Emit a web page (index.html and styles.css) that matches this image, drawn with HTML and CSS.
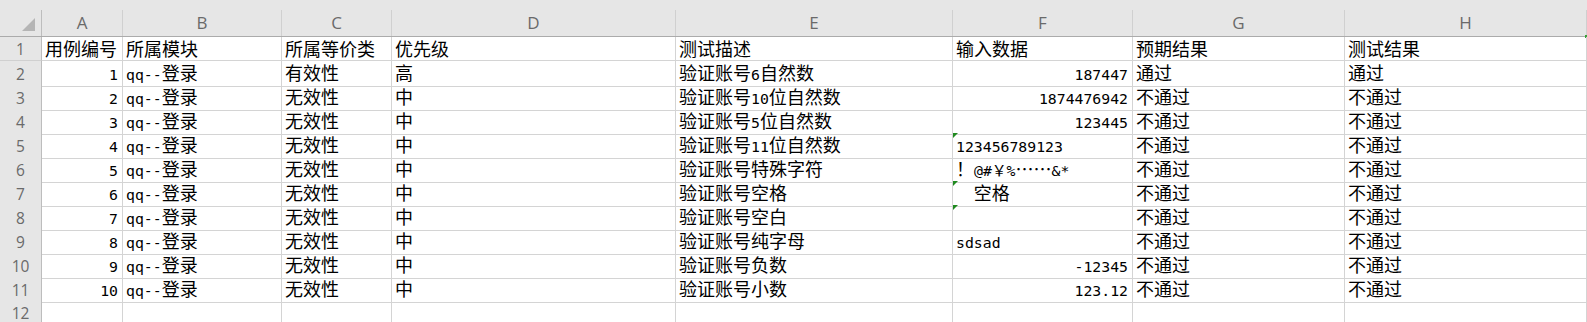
FILE: index.html
```html
<!DOCTYPE html>
<html lang="zh-CN">
<head>
<meta charset="utf-8">
<title>测试用例</title>
<link rel="stylesheet" href="styles.css">
</head>
<body>
<div class="sheet">
  <div class="colhead">
    <div class="hc corner"><span class="tri"></span></div>
    <div class="hc">A</div>
    <div class="hc">B</div>
    <div class="hc">C</div>
    <div class="hc">D</div>
    <div class="hc">E</div>
    <div class="hc">F</div>
    <div class="hc">G</div>
    <div class="hc last">H</div>
  </div>

  <div class="row">
    <div class="rn">1</div>
    <div class="c">用例编号</div>
    <div class="c">所属模块</div>
    <div class="c">所属等价类</div>
    <div class="c">优先级</div>
    <div class="c">测试描述</div>
    <div class="c">输入数据</div>
    <div class="c">预期结果</div>
    <div class="c">测试结果</div>
  </div>
  <div class="row">
    <div class="rn">2</div>
    <div class="c r"><span class="m">1</span></div>
    <div class="c"><span class="m">qq--</span>登录</div>
    <div class="c">有效性</div>
    <div class="c">高</div>
    <div class="c">验证账号<span class="m">6</span>自然数</div>
    <div class="c r"><span class="m">187447</span></div>
    <div class="c">通过</div>
    <div class="c">通过</div>
  </div>
  <div class="row">
    <div class="rn">3</div>
    <div class="c r"><span class="m">2</span></div>
    <div class="c"><span class="m">qq--</span>登录</div>
    <div class="c">无效性</div>
    <div class="c">中</div>
    <div class="c">验证账号<span class="m">10</span>位自然数</div>
    <div class="c r"><span class="m">1874476942</span></div>
    <div class="c">不通过</div>
    <div class="c">不通过</div>
  </div>
  <div class="row">
    <div class="rn">4</div>
    <div class="c r"><span class="m">3</span></div>
    <div class="c"><span class="m">qq--</span>登录</div>
    <div class="c">无效性</div>
    <div class="c">中</div>
    <div class="c">验证账号<span class="m">5</span>位自然数</div>
    <div class="c r"><span class="m">123445</span></div>
    <div class="c">不通过</div>
    <div class="c">不通过</div>
  </div>
  <div class="row">
    <div class="rn">5</div>
    <div class="c r"><span class="m">4</span></div>
    <div class="c"><span class="m">qq--</span>登录</div>
    <div class="c">无效性</div>
    <div class="c">中</div>
    <div class="c">验证账号<span class="m">11</span>位自然数</div>
    <div class="c flag"><span class="m">123456789123</span></div>
    <div class="c">不通过</div>
    <div class="c">不通过</div>
  </div>
  <div class="row">
    <div class="rn">6</div>
    <div class="c r"><span class="m">5</span></div>
    <div class="c"><span class="m">qq--</span>登录</div>
    <div class="c">无效性</div>
    <div class="c">中</div>
    <div class="c">验证账号特殊字符</div>
    <div class="c">！<span class="m">@#￥%</span>……<span class="m">&amp;*</span></div>
    <div class="c">不通过</div>
    <div class="c">不通过</div>
  </div>
  <div class="row">
    <div class="rn">7</div>
    <div class="c r"><span class="m">6</span></div>
    <div class="c"><span class="m">qq--</span>登录</div>
    <div class="c">无效性</div>
    <div class="c">中</div>
    <div class="c">验证账号空格</div>
    <div class="c flag"><span class="m">  </span>空格</div>
    <div class="c">不通过</div>
    <div class="c">不通过</div>
  </div>
  <div class="row">
    <div class="rn">8</div>
    <div class="c r"><span class="m">7</span></div>
    <div class="c"><span class="m">qq--</span>登录</div>
    <div class="c">无效性</div>
    <div class="c">中</div>
    <div class="c">验证账号空白</div>
    <div class="c flag"></div>
    <div class="c">不通过</div>
    <div class="c">不通过</div>
  </div>
  <div class="row">
    <div class="rn">9</div>
    <div class="c r"><span class="m">8</span></div>
    <div class="c"><span class="m">qq--</span>登录</div>
    <div class="c">无效性</div>
    <div class="c">中</div>
    <div class="c">验证账号纯字母</div>
    <div class="c"><span class="m">sdsad</span></div>
    <div class="c">不通过</div>
    <div class="c">不通过</div>
  </div>
  <div class="row">
    <div class="rn">10</div>
    <div class="c r"><span class="m">9</span></div>
    <div class="c"><span class="m">qq--</span>登录</div>
    <div class="c">无效性</div>
    <div class="c">中</div>
    <div class="c">验证账号负数</div>
    <div class="c r"><span class="m">-12345</span></div>
    <div class="c">不通过</div>
    <div class="c">不通过</div>
  </div>
  <div class="row">
    <div class="rn">11</div>
    <div class="c r"><span class="m">10</span></div>
    <div class="c"><span class="m">qq--</span>登录</div>
    <div class="c">无效性</div>
    <div class="c">中</div>
    <div class="c">验证账号小数</div>
    <div class="c r"><span class="m">123.12</span></div>
    <div class="c">不通过</div>
    <div class="c">不通过</div>
  </div>
  <div class="row">
    <div class="rn">12</div>
    <div class="c"></div>
    <div class="c"></div>
    <div class="c"></div>
    <div class="c"></div>
    <div class="c"></div>
    <div class="c"></div>
    <div class="c"></div>
    <div class="c"></div>
  </div>
</div>
</body>
</html>
```
FILE: styles.css
```css
* { box-sizing: border-box; }
html, body {
  margin: 0;
  padding: 0;
  background: #ffffff;
  overflow: hidden;
}
.sheet {
  width: 1587px;
  height: 322px;
  overflow: hidden;
  font-family: "Noto Sans CJK SC", "Noto Sans", sans-serif;
  color: #000;
}
.colhead,
.row {
  display: grid;
  grid-template-columns: 42px 81px 159px 110px 284px 277px 180px 212px 242px;
}
.colhead {
  background: #e6e6e6;
  padding-top: 10px;
  height: 37px;
  border-bottom: 1px solid #ababab;
  position: relative;
}
.hc {
  height: 26px;
  border-right: 1px solid #d0d0d0;
  display: flex;
  align-items: center;
  justify-content: center;
  font-family: "Open Sans", "Noto Sans", sans-serif;
  font-size: 17px;
  color: #6a6a6a;
  padding-bottom: 1px;
}
.hc.corner {
  border-right-color: #bdbdbd;
  justify-content: flex-end;
  align-items: flex-end;
  padding: 0 6px 5px 0;
}
.tri {
  width: 0;
  height: 0;
  border-left: 13px solid transparent;
  border-bottom: 13px solid #b5b5b5;
}
.hc.last { position: relative; border-right-color: #cfcfcf; }
.hc.last::after {
  content: "";
  position: absolute;
  right: -1px;
  bottom: -2px;
  width: 2px;
  height: 3px;
  background: #3aa03a;
}
.row { height: 24px; }
.rn {
  background: #e6e6e6;
  border-right: 1px solid #bdbdbd;
  border-bottom: 1px solid #d0d0d0;
  display: flex;
  align-items: center;
  justify-content: center;
  font-family: "Open Sans", "Noto Sans", sans-serif;
  font-size: 15.5px;
  color: #6a6a6a;
}
.c {
  position: relative;
  border-right: 1px solid #d4d4d4;
  border-bottom: 1px solid #d4d4d4;
  padding: 0 4px 0 3px;
  font-size: 18px;
  line-height: 23px;
  white-space: pre;
}
.c.r { text-align: right; }
.m {
  font-family: "DejaVu Sans Mono", "Liberation Mono", "Noto Sans CJK SC", monospace;
  font-size: 14.8px;
}
.flag::before {
  content: "";
  position: absolute;
  left: 0;
  top: 0;
  width: 0;
  height: 0;
  border-top: 5px solid #1f8a1f;
  border-right: 5px solid transparent;
}
```
